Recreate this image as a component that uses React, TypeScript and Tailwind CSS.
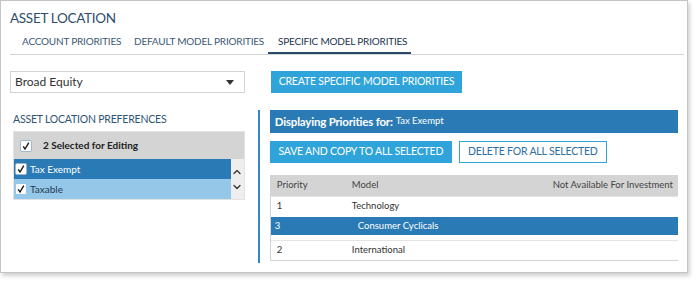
import { ChevronDown, ChevronUp } from "lucide-react";

function Check({ className }: { className: string }) {
  return (
    <span className={`flex items-center justify-center bg-white border border-[#9cb7cf] rounded-[2px] ${className}`}>
      <svg width="10" height="10" viewBox="0 0 10 10" fill="none">
        <path d="M2.2 5.4 L4 8 L7.8 1.6" stroke="#1a1a1a" strokeWidth="1.4" fill="none" />
      </svg>
    </span>
  );
}

const rows = [
  { p: "1", m: "Technology", sel: false },
  { p: "3", m: "Consumer Cyclicals", sel: true },
  { p: "2", m: "International", sel: false },
];

export default function App() {
  return (
    <div className="w-[697px] h-[283px] bg-white font-['Lato',sans-serif]">
      <div className="w-[688px] h-[273px] border border-[#c4c4c4] shadow-[2px_3px_4px_rgba(0,0,0,0.18)] px-[9px] flex flex-col">
        <h1 className="text-[13.5px] leading-[20px] text-[#2e4d6b] mt-[7px] tracking-[-0.3px]">ASSET LOCATION</h1>

        <div className="flex mt-[6px] border-b border-[#d0d5da] w-[674px] text-[10px] text-[#3b5874] whitespace-nowrap">
          <div className="w-[112px] pl-[12px] h-[20px] tracking-[-0.2px]">ACCOUNT PRIORITIES</div>
          <div className="w-[146px] pl-[12px] h-[20px] tracking-[-0.2px]">DEFAULT MODEL PRIORITIES</div>
          <div className="w-[143px] pl-[10px] h-[20px] border-b-2 border-[#2b4a67] text-[#1d3550] -mb-px tracking-[-0.2px]">SPECIFIC MODEL PRIORITIES</div>
        </div>

        <div className="flex items-center mt-[16px]">
          <div className="w-[235px] h-[22px] border border-[#d3d3d3] flex items-center justify-between pl-[4px] pr-[10px] text-[12px] text-[#333]">
            <span>Broad Equity</span>
            <svg width="8" height="5" viewBox="0 0 8 5"><path d="M0 0 H8 L4 5 Z" fill="#333" /></svg>
          </div>
          <button className="ml-[26px] w-[191px] h-[22px] bg-[#2fa4db] text-white text-[10.5px] text-center whitespace-nowrap tracking-[-0.2px]">
            CREATE SPECIFIC MODEL PRIORITIES
          </button>
        </div>

        <div className="flex mt-[17px]">
          <div className="w-[234px] ml-[3px] pt-[2px]">
            <div className="text-[10.5px] leading-[14px] text-[#2e5476] tracking-[-0.2px]">ASSET LOCATION PREFERENCES</div>
            <div className="mt-[5px] border border-[#e2e2e2] text-[10px]">
              <div className="h-[27px] bg-[#d4d4d4] flex items-center pl-[6px]">
                <Check className="w-[12px] h-[12px]" />
                <span className="ml-[11px] font-bold text-[#222]">2 Selected for Editing</span>
              </div>
              <div className="flex">
                <div className="flex-1">
                  <div className="h-[20px] bg-[#2a7bb5] flex items-center pl-[1px] text-white">
                    <Check className="w-[12px] h-[12px] border-[#2a7bb5]" />
                    <span className="ml-[3px]">Tax Exempt</span>
                  </div>
                  <div className="h-[20px] bg-[#95c7e8] flex items-center pl-[1px] text-[#1e3a55]">
                    <Check className="w-[12px] h-[12px] border-[#95c7e8]" />
                    <span className="ml-[3px]">Taxable</span>
                  </div>
                </div>
                <div className="w-[13px] bg-[#eeeeee] flex flex-col items-center justify-center text-[#333]">
                  <ChevronUp size={12} strokeWidth={2.5} />
                  <ChevronDown size={12} strokeWidth={2.5} className="mt-[3px]" />
                </div>
              </div>
            </div>
          </div>

          <div className="w-[2px] h-[153px] bg-[#3487c2] ml-[13px]" />

          <div className="ml-[10px] w-[412px]">
            <div className="h-[23px] bg-[#2a7bb5] flex items-center pl-[5px] text-white">
              <span className="text-[11.5px] font-bold tracking-[-0.2px]">Displaying Priorities for:</span>
              <span className="text-[9.5px] ml-[3px]">Tax Exempt</span>
            </div>
            <div className="flex mt-[8px] whitespace-nowrap">
              <button className="w-[182px] h-[22px] bg-[#2fa4db] text-white text-[10.5px] text-center tracking-[-0.2px]">
                SAVE AND COPY TO ALL SELECTED
              </button>
              <button className="ml-[7px] w-[148px] h-[22px] border border-[#2fa4db] text-[#2d6fa4] text-[10.5px] text-center tracking-[-0.2px]">
                DELETE FOR ALL SELECTED
              </button>
            </div>
            <div className="mt-[12px] border-l border-b border-[#d2d2d2] text-[9.5px] text-[#333]">
              <div className="h-[21px] bg-[#d4d4d4] flex items-center pl-[6px] text-[#444]">
                <span className="w-[75px]">Priority</span>
                <span className="flex-1">Model</span>
                <span className="pr-[5px]">Not Available For Investment</span>
              </div>
              {rows.map((r) =>
                r.sel ? (
                  <div key={r.p} className="h-[18px] mt-[1px] bg-[#2a7bb5] text-white flex items-center pl-[4px] border-b-[5px] border-white box-content">
                    <span className="w-[83px]">{r.p}</span>
                    <span>{r.m}</span>
                  </div>
                ) : (
                  <div key={r.p} className="h-[20px] flex items-center pl-[6px] border-t border-[#e4e4e4] first:border-t-0">
                    <span className="w-[75px]">{r.p}</span>
                    <span>{r.m}</span>
                  </div>
                )
              )}
            </div>
          </div>
        </div>
      </div>
    </div>
  );
}
